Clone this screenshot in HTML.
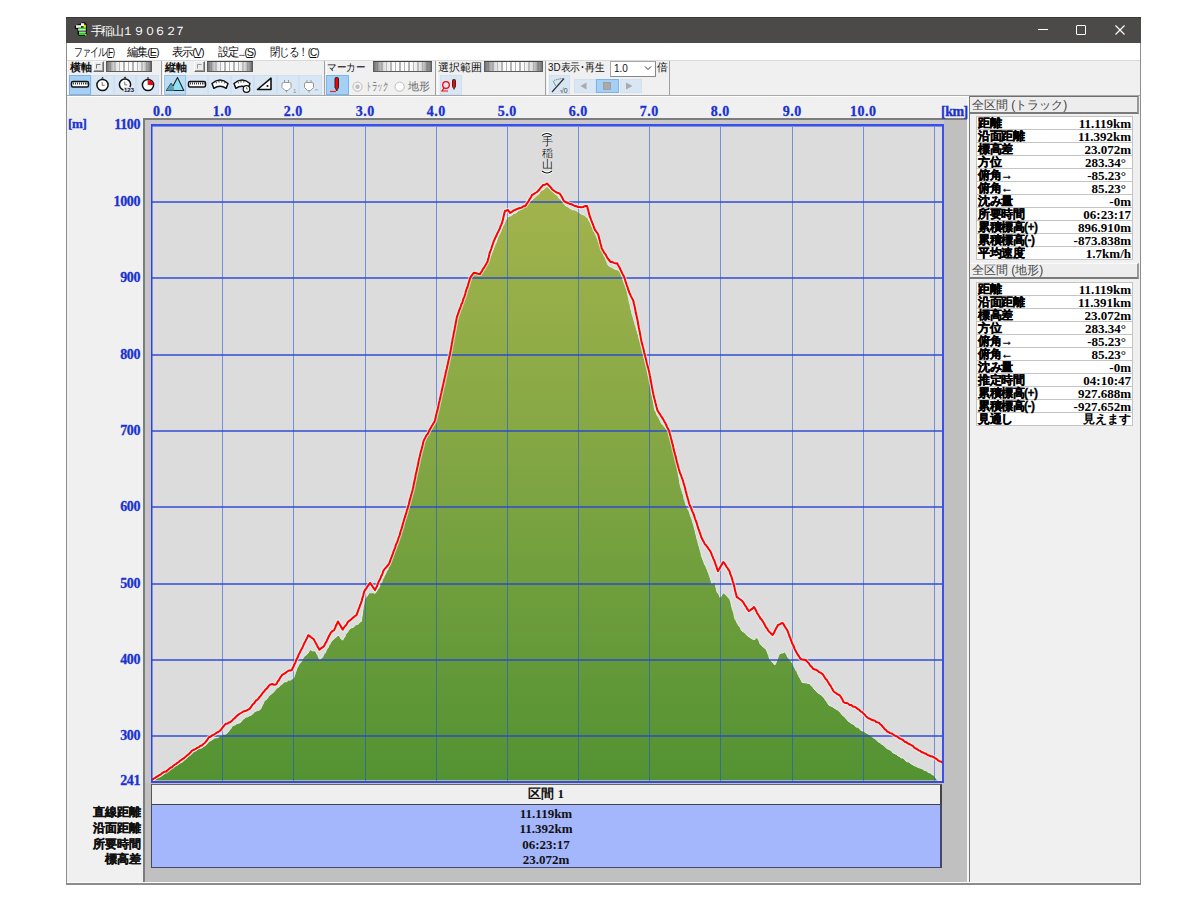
<!DOCTYPE html>
<html><head><meta charset="utf-8">
<style>
*{margin:0;padding:0;box-sizing:border-box}
html,body{width:1200px;height:900px;background:#fff;overflow:hidden;position:relative;font-family:"Liberation Sans",sans-serif}
.a{position:absolute}
#win{left:66px;top:17px;width:1075px;height:868px;border:1px solid #8c8c8c;border-top:none;background:#f0f0f0}
#title{left:66px;top:17px;width:1075px;height:26px;background:#4b4a48;color:#fff;font-size:12px;border-top:1px solid #3a3937}
#menu{left:67px;top:43px;width:1073px;height:17px;background:#fff;font-size:11px;color:#111}
#menu span{position:absolute;top:2px;white-space:nowrap;letter-spacing:-1.2px;font-size:11.5px;transform-origin:0 0}
#tb{left:67px;top:60px;width:1073px;height:36px;background:#f0f0f0;border-top:1px solid #dadada;border-bottom:1px solid #a8a8a8}
.grp{position:absolute;top:61px;height:34px;border-left:1px solid #fff;border-right:1px solid #a0a0a0}
.lbl{position:absolute;font-size:11px;color:#111;top:62px;line-height:11px}
.sld{position:absolute;top:61px;height:11px;border:1px solid #5c5c5c;border-top-color:#444;background:linear-gradient(90deg,rgba(90,90,90,.85),rgba(200,200,200,.5) 18%,rgba(255,255,255,0) 35%,rgba(255,255,255,0) 65%,rgba(200,200,200,.5) 82%,rgba(90,90,90,.85)),repeating-linear-gradient(90deg,#fafafa 0,#fafafa 2.5px,#b4b4b4 3px,#b4b4b4 4px,#fafafa 4.5px)}
.chk{position:absolute;top:61px;width:11px;height:11px;border:1px solid;border-color:#fff #6a6a6a #6a6a6a #fff;background:#ececec;box-shadow:inset -1px -1px 0 #a0a0a0}
.btn{position:absolute;top:75px;height:20px;background:#d9e7f4;border:1px solid #d0e0f0}
.btn.on{background:#a5cff5;border:1px solid #7ab6ee}
.btn.on2{background:#bcdcf6;border:1px solid #95c6ef}
#panelL{left:67px;top:96px;width:901px;height:787px;background:#f0f0f0;border-top:1px solid #fff}
#frame{left:143px;top:118px;width:825px;height:764px;background:#c0c0c0;border-top:2px solid #7c7c7c;border-left:2px solid #7c7c7c}
#frameIn{left:145px;top:120px;width:799px;height:5px;background:#c9c9c9;box-shadow:inset 5px 0 0 #c9c9c9}
#frameInL{left:145px;top:120px;width:6px;height:663px;background:#c6c6c6}
.xl{position:absolute;top:103.5px;width:60px;text-align:center;font:bold 14px "Liberation Serif",serif;color:#1a32d0;line-height:15px;-webkit-text-stroke:0.3px #1a32d0;letter-spacing:0.5px;text-indent:0.5px}
.yl{position:absolute;left:90px;width:50px;text-align:right;font:bold 14px "Liberation Serif",serif;color:#1a32d0;line-height:15px;-webkit-text-stroke:0.3px #1a32d0;letter-spacing:-0.4px}
#sep{left:967px;top:96px;width:3px;height:787px;background:#787878;border-left:2px solid #f8f8f8}
#botw{left:67px;top:882px;width:1073px;height:1px;background:#fcfcfc}
#botd{left:67px;top:883px;width:1073px;height:1px;background:#8c8c8c}
#panelR{left:970px;top:96px;width:170px;height:787px;background:#f0f0f0}
.hdr{position:absolute;left:970px;width:169px;height:16px;background:#ededed;border-top:1px solid #fafafa;border-bottom:2px solid #7a7a7a;border-right:2px solid #9a9a9a;font-size:12px;color:#444;padding-left:2px;line-height:13px;white-space:nowrap}
.st{left:976px;width:157px;background:#fff;border:1px solid #c4c4c4}
.st .r{position:absolute;left:0;width:155px;height:13px;border-bottom:1px solid #c4c4c4;white-space:nowrap}
.st .k{position:absolute;left:1px;top:0;font:bold 12px "Liberation Sans",sans-serif;line-height:13px;color:#000;letter-spacing:-0.5px;-webkit-text-stroke:0.3px #000}
.st .v{position:absolute;top:0;font:bold 13px "Liberation Serif",serif;line-height:13px;color:#000}
#sec{left:151px;top:784px;width:791px;height:21px;background:#efefef;border-left:1px solid #555;border-top:1px solid #666;border-right:2px solid #444;border-bottom:1px solid #444;text-align:center;font:bold 13px "Liberation Serif",serif;color:#111;line-height:18px}
#blue{left:151px;top:805px;width:791px;height:63px;background:#a4b6fc;border:1px solid #474767;border-top:none;border-right:2px solid #474767;text-align:center;font:bold 13px "Liberation Serif",serif;color:#111;padding-top:1px}
#blue div{height:15.4px;line-height:16px}
.bl{position:absolute;left:70px;width:71px;text-align:right;font:bold 12px "Liberation Sans",sans-serif;color:#111;white-space:nowrap;-webkit-text-stroke:0.3px #111}
</style></head><body>
<div class="a" id="win"></div>
<div class="a" id="title">
  <svg class="a" style="left:0;top:0" width="30" height="26"><g transform="translate(-66,-18)">
<path d="M74.5 26.5L77.5 24.5L80.5 23.5L82 22.2L85 22.2L86.8 24.5L86.8 33.5L87.5 35L85 36L79 36L77.5 34L77.5 29.5L75 28.8Z" fill="#160616"/>
<rect x="76" y="25.2" width="5" height="2.6" fill="#eee"/><rect x="81" y="23.2" width="3.2" height="3" fill="#f4f4ff"/>
<rect x="83.6" y="24.8" width="2.2" height="3.6" fill="#ee0"/>
<rect x="78.2" y="27.6" width="7.6" height="2" fill="#1e1"/>
<rect x="78.2" y="29.2" width="7.6" height="1.4" fill="#f4fff4"/>
<rect x="79" y="31.6" width="6.8" height="1.2" fill="#f0fff0"/>
<rect x="79" y="32.8" width="6.4" height="2.2" fill="#0e0"/>
<rect x="85" y="34" width="1.6" height="1.6" fill="#cc0"/>
</g></svg>
  <span class="a" style="left:24.5px;top:6px;width:12px;font-size:11.5px;text-align:center">手</span><span class="a" style="left:34.5px;top:6px;width:12px;font-size:11.5px;text-align:center">稲</span><span class="a" style="left:45.5px;top:6px;width:12px;font-size:11.5px;text-align:center">山</span><span class="a" style="left:56.0px;top:6px;width:12px;font-size:11.5px;text-align:center">１</span><span class="a" style="left:67.0px;top:6px;width:12px;font-size:11.5px;text-align:center">９</span><span class="a" style="left:77.5px;top:6px;width:12px;font-size:11.5px;text-align:center">０</span><span class="a" style="left:88.0px;top:6px;width:12px;font-size:11.5px;text-align:center">６</span><span class="a" style="left:98.5px;top:6px;width:12px;font-size:11.5px;text-align:center">２</span><span class="a" style="left:108.0px;top:6px;width:12px;font-size:11.5px;text-align:center">７</span>
  <div class="a" style="left:972px;top:11px;width:10px;height:1.2px;background:#fff"></div>
  <div class="a" style="left:1010px;top:7px;width:10px;height:9.5px;border:1.2px solid #fff;border-radius:1px"></div>
  <svg class="a" style="left:1049px;top:7px" width="11" height="11"><path d="M0.5 0.5L9.5 9.5M9.5 0.5L0.5 9.5" stroke="#fff" stroke-width="1.2"/></svg>
</div>
<div class="a" id="menu">
  <span style="left:6.5px;transform:scaleX(0.74)">ファイル(<u>F</u>)</span>
  <span style="left:60px;transform:scaleX(0.94)">編集(<u>E</u>)</span>
  <span style="left:105px;transform:scaleX(0.94)">表示(<u>V</u>)</span>
  <span style="left:150.5px;transform:scaleX(0.95)">設定...(<u>S</u>)</span>
  <span style="left:203px;transform:scaleX(0.875)">閉じる！(<u>C</u>)</span>
</div>
<div class="a" id="tb"></div>
<div class="grp" style="left:67px;width:95px"></div>
<div class="grp" style="left:163px;width:162px"></div>
<div class="grp" style="left:326px;width:110px"></div>
<div class="grp" style="left:437px;width:109px"></div>
<div class="grp" style="left:547px;width:123px"></div>
<div class="lbl" style="left:70px;font-weight:bold">横軸</div>
<div class="chk" style="left:93px"></div>
<div class="sld" style="left:106px;width:46px"></div>
<div class="btn on" style="left:69px;width:22px"></div>
<div class="btn" style="left:91px;width:23px"></div>
<div class="btn" style="left:114px;width:22px"></div>
<div class="btn" style="left:136px;width:23px"></div>
<div class="lbl" style="left:165px;font-weight:bold">縦軸</div>
<div class="chk" style="left:194px"></div>
<div class="sld" style="left:207px;width:46px"></div>
<div class="btn on2" style="left:164px;width:22px"></div>
<div class="btn" style="left:186px;width:22px"></div>
<div class="btn" style="left:208px;width:23px"></div>
<div class="btn" style="left:231px;width:23px"></div>
<div class="btn" style="left:254px;width:23px"></div>
<div class="btn" style="left:277px;width:22px"></div>
<div class="btn" style="left:299px;width:23px"></div>
<div class="lbl" style="left:326.5px;transform:scaleX(0.87);transform-origin:0 0;white-space:nowrap">マーカー</div>
<div class="sld" style="left:373px;width:59px"></div>
<div class="btn on" style="left:326px;width:23px"></div>
<div class="lbl" style="left:365.5px;top:81px;color:#666;font-size:11px;transform:scaleX(0.5);transform-origin:0 0;white-space:nowrap">トラック</div>
<div class="lbl" style="left:408px;top:81px;color:#666">地形</div>
<div class="lbl" style="left:438px">選択範囲</div>
<div class="sld" style="left:484px;width:59px"></div>
<div class="btn" style="left:440px;width:22px"></div>
<div class="lbl" style="left:548px;transform:scaleX(0.89);transform-origin:0 0;white-space:nowrap">3D表示･再生</div>
<div class="a" style="left:610px;top:61px;width:46px;height:16px;background:#fff;border:1px solid #a8a8a8;border-right-color:#888;border-bottom-color:#888;font-size:10px;padding-left:3px;line-height:14px;color:#111">1.0</div>
<div class="lbl" style="left:657px">倍</div>
<div class="btn" style="left:549px;top:75px;width:21px;height:19px"></div>
<div class="btn" style="left:574px;top:79px;width:22px;height:14px"></div>
<div class="btn on" style="left:596px;top:79px;width:23px;height:14px"></div>
<div class="btn" style="left:620px;top:79px;width:22px;height:14px"></div>
<svg class="a" style="left:0;top:0" width="700" height="100">
 <!-- small check buttons mark -->
 <path d="M96.5 64.5h4M96.5 64.5v4" stroke="#777" fill="none"/>
 <path d="M197.5 64.5h4M197.5 64.5v4" stroke="#999" fill="none"/>
 <!-- ruler 1 -->
 <rect x="71.5" y="81.5" width="17" height="5.5" rx="1.5" fill="#fff" stroke="#111" stroke-width="1.5"/>
 <path d="M73.5 82.5v2M75.5 82.5v2M77.5 82.5v2M79.5 82.5v2M81.5 82.5v2M83.5 82.5v2M85.5 82.5v2M87 82.5v2" stroke="#222" stroke-width="0.9"/>
 <!-- stopwatch -->
 <circle cx="102.5" cy="85" r="5.6" fill="#fff" stroke="#111" stroke-width="1.5"/>
 <path d="M101 78.6l1.5-1.6l1.5 1.6z" fill="#111"/>
 <path d="M102.2 82v3.3h2.5" stroke="#666" fill="none" stroke-width="0.9"/>
 <circle cx="125" cy="84.6" r="5.6" fill="#fff" stroke="#111" stroke-width="1.5"/>
 <path d="M123.5 78.2l1.5-1.6l1.5 1.6z" fill="#111"/>
 <path d="M124.8 81.6v3.3h2.5" stroke="#666" fill="none" stroke-width="0.9"/>
 <rect x="123.5" y="86.8" width="7" height="5" fill="#d9e7f4"/>
 <text x="124" y="92" font-family="Liberation Sans" font-size="6" font-weight="bold" fill="#111">123</text>
 <circle cx="148" cy="85" r="5.6" fill="#fff" stroke="#111" stroke-width="1.5"/>
 <path d="M148 79.9v5.1h5.1a5.1 5.1 0 0 0-5.1-5.1z" fill="#f00"/>
 <path d="M146.5 78.6l1.5-1.6l1.5 1.6z" fill="#111"/>
 <path d="M148 80v5" stroke="#666" stroke-width="0.8"/>
 <!-- mountains -->
 <path d="M166.5 90.5l4.5-7l2 2.5l4.5-8.6l6.3 13.1z" fill="#8fe0f0" stroke="#222" stroke-width="1.1" stroke-linejoin="round"/>
 <path d="M166.5 90.5l4.5-7l3 4.5l0 2.5z" fill="#5fa0b0"/>
 <!-- ruler 2 -->
 <rect x="188.5" y="81.5" width="17" height="5.5" rx="1.5" fill="#fff" stroke="#111" stroke-width="1.5"/>
 <path d="M190.5 82.5v2M192.5 82.5v2M194.5 82.5v2M196.5 82.5v2M198.5 82.5v2M200.5 82.5v2M202.5 82.5v2M204 82.5v2" stroke="#222" stroke-width="0.9"/>
 <!-- arc rulers -->
 <path d="M212 83.5Q220 76.5 228 83.5L226.2 88.3Q220 84 213.8 88.3Z" fill="#fff" stroke="#111" stroke-width="1.5" stroke-linejoin="round"/><path d="M216 81.8l0.6 1.6M219 80.9v1.7M222 81l-0.3 1.6M225 82l-0.7 1.5" stroke="#333" stroke-width="0.9"/>
 <path d="M234 83.5Q242 76.5 250 83.5L248.2 88.3Q242 84 235.8 88.3Z" fill="#fff" stroke="#111" stroke-width="1.5" stroke-linejoin="round"/><path d="M238 81.8l0.6 1.6M241 80.9v1.7M244 81l-0.3 1.6" stroke="#333" stroke-width="0.9"/>
 <circle cx="246.5" cy="89" r="3.3" fill="#fff" stroke="#111" stroke-width="1.2"/><path d="M246.5 87.2v1.8h1.5" stroke="#555" stroke-width="0.7" fill="none"/>
 <!-- set square -->
 <path d="M257.5 89.5L271 78.2V89.5Z" fill="#fff" stroke="#111" stroke-width="1.6" stroke-linejoin="round"/>
 <circle cx="267.5" cy="86" r="1.1" fill="#111"/>
 <!-- plugs -->
 <path d="M282 84q0-1.5 1.5-1.5h6q1.5 0 1.5 1.5v3.5l-3 3h-3l-3-3z" fill="#fff" stroke="#999" stroke-width="1"/>
 <path d="M284.5 80v2.5M288.5 80v2.5M286.5 90.5v2" stroke="#999" stroke-width="1"/>
 <text x="293" y="93" font-family="Liberation Sans" font-size="6" fill="#888">1</text>
 <path d="M304.5 84q0-1.5 1.5-1.5h6q1.5 0 1.5 1.5v3.5l-3 3h-3l-3-3z" fill="#fff" stroke="#999" stroke-width="1"/>
 <path d="M307 80v2.5M311 80v2.5M309 90.5v2" stroke="#999" stroke-width="1"/>
 <path d="M315 90.5l1.5-1.5l1.5 1.5" stroke="#888" fill="none" stroke-width="0.8"/>
 <!-- marker pen -->
 <rect x="335" y="77.5" width="3.5" height="11" rx="1.2" fill="#f00" stroke="#222" stroke-width="1"/>
 <path d="M335.5 88.5l1.3 2.5l1.3-2.5" fill="#f00" stroke="#222" stroke-width="0.8"/>
 <path d="M330 91.5h6" stroke="#f22" stroke-width="1.3"/>
 <!-- radios -->
 <circle cx="357.5" cy="86.7" r="4.6" fill="#f4f4f4" stroke="#bbb" stroke-width="1"/>
 <circle cx="357.5" cy="86.7" r="2.2" fill="#bdbdbd"/>
 <circle cx="399.6" cy="86.7" r="4.6" fill="#fff" stroke="#bbb" stroke-width="1"/>
 <!-- lasso -->
 <circle cx="446" cy="85" r="3.3" fill="none" stroke="#f00" stroke-width="1.3"/>
 <path d="M444 88l-2 3h6" stroke="#f00" fill="none" stroke-width="1.2"/>
 <rect x="452.5" y="79.5" width="3" height="8" rx="1" fill="#f00" stroke="#222" stroke-width="0.9"/>
 <path d="M453 87.5l1 2l1-2" fill="#f00" stroke="#222" stroke-width="0.6"/>
 <!-- 3D icon -->
 <path d="M552 92l12-13.5" stroke="#333" stroke-width="1.2"/>
 <path d="M554 80.5q4-1.5 9-2" stroke="#555" stroke-dasharray="1,1" fill="none"/>
 <path d="M553 81l3 5" stroke="#5aa" stroke-width="1"/>
 <text x="560" y="93" font-family="Liberation Sans" font-size="7" fill="#444">√0</text>
 <!-- play buttons -->
 <path d="M580.5 86l6-3.5v7z" fill="#aaa"/>
 <rect x="603.5" y="82.5" width="7" height="7" fill="#aaa" stroke="#999" stroke-width="0.8"/>
 <path d="M626 82.5l6.5 3.5l-6.5 3.5z" fill="#aaa"/>
 <!-- combobox chevron -->
 <path d="M645 66.5l3 3l3-3" stroke="#333" fill="none" stroke-width="1"/>
</svg>
<div class="a" id="panelL"></div>
<div class="a" id="frame"></div>
<div class="a" id="frameIn"></div><div class="a" id="frameInL"></div>
<div class="a" id="sep"></div>
<div class="a" id="panelR"></div><div class="a" id="botw"></div><div class="a" id="botd"></div>
<div class="xl" style="left:153px;width:30px;text-align:left;text-indent:0">0.0</div><div class="xl" style="left:192.0px">1.0</div><div class="xl" style="left:263.0px">2.0</div><div class="xl" style="left:335.0px">3.0</div><div class="xl" style="left:406.0px">4.0</div><div class="xl" style="left:477.0px">5.0</div><div class="xl" style="left:548.0px">6.0</div><div class="xl" style="left:619.0px">7.0</div><div class="xl" style="left:690.0px">8.0</div><div class="xl" style="left:762.0px">9.0</div><div class="xl" style="left:833.0px">10.0</div>
<div class="xl" style="left:941px;width:26px;text-align:left;letter-spacing:-0.5px;text-indent:0">[km]</div>
<div class="yl" style="left:68px;top:115.5px;width:26px;text-align:left;font-size:13px;letter-spacing:-0.3px">[m]</div>
<div class="yl" style="top:117px">1100</div><div class="yl" style="top:194px">1000</div><div class="yl" style="top:270px">900</div><div class="yl" style="top:347px">800</div><div class="yl" style="top:423px">700</div><div class="yl" style="top:499px">600</div><div class="yl" style="top:576px">500</div><div class="yl" style="top:652px">400</div><div class="yl" style="top:728px">300</div>
<div class="yl" style="top:772.5px">241</div>
<svg width="1200" height="900" style="position:absolute;left:0;top:0">
<defs><linearGradient id="gg" x1="0" y1="183" x2="0" y2="781" gradientUnits="userSpaceOnUse">
<stop offset="0" stop-color="#a4b44c"/><stop offset="0.41" stop-color="#86a845"/><stop offset="1" stop-color="#539232"/></linearGradient></defs>
<rect x="151" y="124" width="792" height="657" fill="#dcdcdc"/>
<polygon points="151.0,781.0 151.7,781.0 153.4,780.7 155.0,779.8 156.7,777.7 158.4,776.8 160.0,777.0 161.7,775.6 163.2,774.8 164.8,773.5 166.3,771.9 167.9,771.1 169.4,770.0 171.0,768.7 172.6,767.8 174.1,766.3 175.7,765.7 177.2,764.6 178.8,764.1 180.3,762.8 181.9,762.3 183.4,761.1 185.0,759.3 186.4,758.2 187.9,756.9 189.4,755.5 190.8,754.7 192.3,752.9 193.8,751.7 195.2,751.1 196.7,750.0 198.3,748.9 199.9,748.2 201.6,748.1 203.2,746.8 204.8,745.9 206.3,744.7 207.8,742.9 209.2,741.3 210.7,740.7 212.6,739.5 214.4,738.2 216.3,737.8 218.1,737.5 220.0,735.8 221.8,735.4 223.5,734.0 225.2,734.3 227.0,733.1 228.2,732.0 229.3,730.4 230.5,729.1 231.6,727.4 232.8,725.5 234.8,725.1 236.7,723.8 238.7,723.2 240.1,722.7 241.5,721.5 242.8,719.2 244.2,718.8 245.6,717.3 247.6,716.8 249.5,715.7 251.5,715.0 253.2,713.3 255.0,711.5 257.5,710.6 260.0,709.7 260.9,708.5 261.9,706.0 262.8,704.6 263.8,702.1 264.7,700.5 266.0,699.7 267.3,698.5 268.5,696.5 269.8,695.4 271.1,694.0 272.4,693.3 273.8,691.8 275.1,690.2 276.5,688.6 277.8,687.5 279.2,686.8 280.5,684.8 281.9,684.6 283.2,682.8 284.9,681.7 286.7,681.7 288.4,680.1 290.2,680.2 291.9,679.0 293.7,677.9 294.3,676.0 295.0,674.1 295.6,672.4 296.3,670.3 296.9,668.3 298.0,666.3 299.0,664.4 300.1,663.1 301.2,661.9 302.2,659.7 303.3,657.8 304.5,655.9 305.7,655.5 307.0,654.1 308.2,653.0 309.4,650.6 310.6,649.7 312.5,650.9 314.3,650.7 316.2,652.2 317.0,654.2 317.8,655.5 318.6,657.2 319.4,659.4 321.0,658.7 322.7,657.0 323.6,654.8 324.5,653.8 325.4,652.7 326.3,650.2 327.1,648.5 328.0,647.9 328.9,645.6 329.8,644.4 330.7,642.5 332.2,640.4 333.6,639.4 335.1,637.7 336.5,636.9 338.0,635.2 339.6,636.2 341.2,639.1 342.8,640.1 343.7,637.8 344.7,637.2 345.6,634.6 346.5,633.3 347.5,632.5 348.4,630.4 350.0,628.8 351.6,627.7 353.2,627.3 354.9,625.8 356.5,624.2 358.1,624.4 359.7,622.1 361.3,621.5 361.6,619.0 361.8,617.5 362.1,616.0 362.4,614.3 362.6,611.6 362.9,610.0 363.2,607.7 363.4,606.4 363.7,605.0 364.0,603.1 364.2,601.4 364.5,599.0 365.7,597.8 366.9,596.3 368.2,594.5 369.4,592.6 371.3,592.8 373.1,592.7 375.0,593.4 376.3,591.7 377.7,589.3 379.0,587.7 379.9,585.3 380.7,583.9 381.6,582.7 382.4,579.8 383.3,578.6 384.1,576.5 385.0,574.8 385.9,573.1 386.7,570.8 387.6,570.2 388.4,567.4 389.3,566.0 390.0,564.3 390.6,562.3 391.3,559.9 391.9,558.9 392.6,556.5 393.2,554.6 393.9,552.7 394.5,551.1 395.2,549.2 395.8,548.2 396.5,546.2 397.1,545.1 397.8,543.2 398.4,541.5 399.1,539.0 399.6,536.8 400.2,535.4 400.7,533.3 401.2,532.0 401.7,530.2 402.3,528.7 402.8,526.8 403.3,524.4 403.9,522.8 404.4,521.2 404.9,518.7 405.4,516.9 406.0,515.7 406.5,514.0 407.0,511.6 407.5,510.6 408.0,508.1 408.5,506.1 409.0,504.4 409.6,502.6 410.1,500.8 410.6,499.4 411.1,497.5 411.6,495.4 412.1,494.0 412.6,492.0 413.0,489.8 413.4,488.9 413.7,487.2 414.1,485.1 414.5,482.8 414.9,481.1 415.3,479.4 415.6,476.9 416.0,475.6 416.4,473.9 416.8,471.6 417.2,469.7 417.6,468.9 417.9,466.4 418.3,464.8 418.7,463.0 419.1,461.8 419.6,459.5 420.0,457.3 420.5,456.4 420.9,453.7 421.4,451.4 421.8,450.5 422.3,447.9 422.7,446.4 423.2,445.3 423.6,443.0 424.5,441.6 425.4,439.1 426.3,438.1 427.2,436.4 428.2,434.9 429.1,432.8 430.0,431.7 430.9,430.0 432.1,427.4 433.4,425.7 434.6,424.0 435.1,421.9 435.5,420.9 435.9,417.8 436.4,416.9 436.9,414.2 437.3,412.9 437.8,410.7 438.2,409.0 438.6,407.1 439.0,405.8 439.4,403.5 439.9,401.3 440.3,399.5 440.7,397.6 441.1,396.9 441.5,394.8 441.9,393.4 442.3,391.3 442.7,388.5 443.2,387.6 443.6,386.0 444.0,384.1 444.4,382.0 444.8,380.2 445.2,378.1 445.6,376.4 446.0,375.0 446.4,372.4 446.8,371.0 447.2,369.0 447.6,367.9 448.0,365.8 448.4,364.1 448.8,362.2 449.2,359.6 449.6,358.0 449.9,355.9 450.3,354.4 450.6,352.3 450.9,350.8 451.3,349.4 451.6,347.9 451.9,345.7 452.3,344.3 452.6,341.5 452.9,340.1 453.2,339.2 453.6,336.2 453.9,334.8 454.2,332.6 454.6,330.8 454.9,330.2 455.2,328.5 455.6,326.3 455.9,323.8 456.2,322.3 456.6,320.4 456.9,319.0 457.6,317.4 458.2,315.6 458.9,313.5 459.6,311.8 460.2,309.4 460.9,308.1 461.5,306.9 462.2,304.8 462.9,302.1 463.5,300.8 464.2,299.0 464.8,297.5 465.3,295.0 465.9,294.1 466.4,291.7 467.0,290.2 467.5,288.0 468.1,287.0 468.6,284.9 469.2,282.7 469.7,280.3 470.3,279.0 471.5,277.2 472.8,274.8 474.0,273.9 475.3,272.5 476.5,270.2 477.7,271.4 478.9,273.4 480.1,275.0 481.2,273.3 482.2,271.4 483.3,270.2 484.3,268.8 485.4,266.7 486.4,264.7 487.5,263.0 488.3,261.6 489.2,258.8 490.0,257.0 490.7,255.7 491.4,253.8 492.1,252.3 492.8,250.7 493.5,248.2 494.2,247.0 494.8,245.0 495.5,243.7 496.2,242.4 496.9,240.3 497.6,237.7 498.3,236.6 499.0,235.0 499.8,233.5 500.6,231.9 501.4,229.8 502.2,228.2 503.0,225.3 503.8,224.8 504.6,222.7 505.4,220.7 506.2,219.4 507.0,217.0 510.0,216.0 511.7,215.5 513.3,213.4 515.0,213.4 516.7,212.4 518.3,210.6 520.0,210.0 521.4,209.2 522.9,207.8 524.3,206.1 525.7,205.9 527.1,203.8 528.6,203.3 530.0,202.0 531.4,200.6 532.8,199.0 534.2,198.1 535.7,196.6 537.1,194.9 538.5,194.7 539.9,192.1 541.3,190.6 542.8,190.0 544.2,189.1 545.6,187.6 547.0,186.0 548.4,187.7 549.7,188.7 551.1,190.3 552.5,191.2 553.8,192.5 555.2,194.2 556.5,194.9 557.9,196.3 559.3,198.6 560.6,199.2 562.0,201.0 563.3,203.0 564.7,204.7 566.0,206.0 567.7,206.7 569.4,208.0 571.1,209.0 572.9,209.9 574.6,209.8 576.3,210.7 578.0,212.0 579.7,212.8 581.3,214.0 583.0,214.7 584.7,215.3 586.3,217.1 588.0,218.0 589.0,220.7 590.0,222.0 590.8,223.6 591.6,225.7 592.4,227.2 593.2,229.1 594.0,231.5 594.8,232.5 595.6,234.8 596.4,236.4 597.2,238.3 598.0,240.0 598.7,242.4 599.4,243.0 600.1,245.8 600.9,246.9 601.6,249.1 602.3,251.1 603.0,252.7 603.7,254.1 604.4,256.5 605.1,257.3 605.9,259.8 606.6,261.3 607.3,263.3 608.0,265.0 610.0,266.6 612.0,267.3 614.0,268.7 616.0,269.5 618.0,270.0 620.0,271.3 620.6,272.6 621.2,274.6 621.8,276.0 622.4,277.8 623.0,280.4 623.7,281.0 624.3,283.6 624.9,284.7 625.5,286.4 626.1,288.0 626.7,290.0 627.1,291.3 627.5,293.6 627.9,295.1 628.3,297.3 628.7,298.9 629.1,301.6 629.6,303.5 630.0,304.7 630.4,306.8 630.8,309.1 631.2,310.1 631.6,311.6 632.0,314.0 632.5,315.4 633.1,317.1 633.6,319.6 634.1,320.9 634.7,322.7 635.2,325.1 635.7,326.1 636.3,328.7 636.8,330.2 637.3,331.7 637.9,334.0 638.4,335.1 638.9,337.7 639.5,339.5 640.0,340.7 640.4,342.5 640.9,344.5 641.3,346.7 641.8,348.1 642.2,349.9 642.6,351.9 643.1,353.7 643.5,355.3 644.0,357.3 644.4,358.2 644.9,360.4 645.3,362.0 645.7,364.1 646.1,365.5 646.5,367.4 647.0,368.9 647.4,371.9 647.8,372.9 648.2,374.9 648.6,377.3 649.0,378.2 649.5,381.1 649.9,381.8 650.3,383.5 650.7,386.0 651.0,387.6 651.3,389.5 651.6,392.1 651.9,393.9 652.2,395.6 652.5,397.0 652.9,399.0 653.2,400.4 653.5,403.1 653.8,404.3 654.1,406.0 654.4,408.3 654.7,410.0 655.5,411.2 656.4,413.1 657.2,415.6 658.0,416.1 658.8,417.8 659.6,419.6 660.5,421.3 661.3,423.3 662.6,424.8 664.0,426.2 665.3,427.9 666.7,429.3 668.0,431.3 668.6,432.7 669.1,435.0 669.7,436.4 670.2,438.3 670.8,440.6 671.4,441.4 671.9,443.3 672.5,446.1 673.0,447.3 673.6,449.5 674.1,450.4 674.7,452.7 675.0,454.6 675.3,456.9 675.6,458.0 675.9,460.4 676.3,462.1 676.6,463.6 676.9,466.3 677.2,467.3 677.5,469.2 677.8,471.3 678.1,472.7 678.4,475.3 678.8,476.8 679.1,478.6 679.4,480.4 679.7,482.8 680.0,484.0 680.5,486.6 681.1,488.2 681.6,489.5 682.1,491.4 682.6,493.4 683.2,494.6 683.7,496.5 684.2,499.7 684.8,500.3 685.3,502.7 686.1,505.3 687.0,507.0 687.9,509.3 688.7,510.7 689.4,512.0 690.0,514.2 690.7,516.8 691.3,517.6 692.0,519.6 692.6,521.9 693.3,524.0 693.7,525.3 694.2,527.1 694.6,529.6 695.1,530.5 695.5,533.5 696.0,534.9 696.4,535.8 696.9,538.8 697.3,540.0 697.8,541.6 698.3,543.8 698.9,545.8 699.4,547.2 699.9,549.6 700.4,550.9 701.0,553.0 701.5,556.0 702.0,557.3 702.8,559.6 703.5,561.0 704.2,563.1 705.0,565.2 705.8,566.0 706.5,568.3 707.2,569.6 708.0,572.0 708.6,573.2 709.1,574.9 709.7,576.7 710.3,578.2 710.9,580.2 711.4,582.1 712.0,584.0 713.4,582.8 714.7,581.3 715.1,583.7 715.5,585.6 715.9,587.2 716.3,588.8 716.7,590.7 717.5,592.9 718.4,593.5 719.2,595.1 720.0,597.3 721.1,596.2 722.2,594.4 723.3,592.7 724.8,593.8 726.3,595.5 727.8,596.9 729.3,598.7 730.0,599.7 730.5,601.4 731.0,603.2 731.4,605.0 731.9,607.4 732.4,609.2 732.9,610.7 733.4,612.4 733.9,613.9 734.3,616.4 734.8,618.6 735.3,619.7 736.3,620.9 737.2,623.2 738.2,624.8 739.1,626.4 740.1,627.1 741.0,629.5 742.0,631.0 743.8,632.1 745.5,633.7 747.3,635.7 749.0,636.8 750.6,637.9 752.3,638.9 754.0,639.7 755.6,638.7 757.3,637.0 758.0,639.0 758.6,640.3 759.3,641.4 760.0,643.7 761.5,645.4 763.0,646.8 764.5,648.1 766.0,649.0 766.7,650.9 767.3,651.9 768.0,653.9 768.7,655.6 769.3,658.1 770.0,659.7 771.6,661.5 773.1,662.8 774.7,665.0 775.5,663.9 776.2,662.1 777.0,660.2 777.8,657.8 778.5,655.8 779.3,654.3 781.1,653.0 782.9,653.0 784.7,651.7 785.7,653.6 786.7,654.7 787.7,657.2 788.7,658.3 790.0,660.2 791.4,661.8 792.7,663.7 793.5,665.3 794.4,667.4 795.2,668.7 796.1,670.7 796.9,671.6 797.8,674.1 798.6,675.2 799.5,677.8 800.3,678.5 801.2,680.4 802.0,682.3 804.0,682.7 806.0,682.8 808.0,683.4 810.0,683.7 811.3,685.9 812.6,686.6 814.0,689.0 815.3,690.3 816.9,691.9 818.5,693.4 820.1,694.2 821.7,695.6 823.3,697.0 824.4,698.4 825.5,700.2 826.5,701.5 827.6,703.0 828.7,705.0 830.4,705.9 832.1,706.5 833.9,707.8 835.6,708.9 837.3,709.8 838.7,710.9 840.1,712.1 841.5,714.1 842.9,715.8 844.2,716.3 845.6,718.2 847.0,719.7 848.4,721.4 849.8,722.2 851.3,723.5 852.9,724.1 854.5,725.0 856.0,727.0 857.5,727.3 859.1,728.0 860.7,730.2 862.2,730.8 864.1,731.5 865.9,732.7 867.8,733.8 869.6,734.8 871.5,736.2 872.9,737.6 874.3,738.2 875.8,739.5 877.2,740.6 878.6,742.3 880.0,742.3 881.4,744.2 882.8,744.7 884.3,745.9 885.7,747.6 887.1,748.6 888.6,749.4 890.2,749.9 891.8,751.6 893.3,753.1 894.9,753.7 896.4,754.4 898.0,755.8 899.5,756.4 901.1,758.0 902.6,757.9 904.2,759.0 905.8,761.0 907.3,761.9 908.9,761.8 910.4,763.5 912.0,764.2 913.8,765.6 915.5,766.1 917.3,767.1 919.1,767.8 920.9,768.3 922.6,769.1 924.4,770.4 926.3,770.7 928.1,772.5 930.0,772.7 931.8,774.3 933.7,775.1 935.0,776.7 936.3,778.6 937.6,780.5 939.8,781.4 942.0,781.0 942.0,781.0" fill="url(#gg)" stroke="#e6f0e6" stroke-width="1"/>
<line x1="222.5" y1="127" x2="222.5" y2="781" stroke="#1f4fdc" stroke-opacity="0.55" stroke-width="1"/><line x1="293.5" y1="127" x2="293.5" y2="781" stroke="#1f4fdc" stroke-opacity="0.55" stroke-width="1"/><line x1="365.5" y1="127" x2="365.5" y2="781" stroke="#1f4fdc" stroke-opacity="0.55" stroke-width="1"/><line x1="436.5" y1="127" x2="436.5" y2="781" stroke="#1f4fdc" stroke-opacity="0.55" stroke-width="1"/><line x1="507.5" y1="127" x2="507.5" y2="781" stroke="#1f4fdc" stroke-opacity="0.55" stroke-width="1"/><line x1="578.5" y1="127" x2="578.5" y2="781" stroke="#1f4fdc" stroke-opacity="0.55" stroke-width="1"/><line x1="649.5" y1="127" x2="649.5" y2="781" stroke="#1f4fdc" stroke-opacity="0.55" stroke-width="1"/><line x1="720.5" y1="127" x2="720.5" y2="781" stroke="#1f4fdc" stroke-opacity="0.55" stroke-width="1"/><line x1="792.5" y1="127" x2="792.5" y2="781" stroke="#1f4fdc" stroke-opacity="0.55" stroke-width="1"/><line x1="863.5" y1="127" x2="863.5" y2="781" stroke="#1f4fdc" stroke-opacity="0.55" stroke-width="1"/><line x1="934.5" y1="127" x2="934.5" y2="781" stroke="#1f4fdc" stroke-opacity="0.55" stroke-width="1"/><rect x="152" y="201" width="790" height="2" fill="#2a48d0" fill-opacity="0.72"/><rect x="152" y="277" width="790" height="2" fill="#2a48d0" fill-opacity="0.72"/><rect x="152" y="354" width="790" height="2" fill="#2a48d0" fill-opacity="0.72"/><rect x="152" y="430" width="790" height="2" fill="#2a48d0" fill-opacity="0.72"/><rect x="152" y="506" width="790" height="2" fill="#2a48d0" fill-opacity="0.72"/><rect x="152" y="583" width="790" height="2" fill="#2a48d0" fill-opacity="0.72"/><rect x="152" y="659" width="790" height="2" fill="#2a48d0" fill-opacity="0.72"/><rect x="152" y="735" width="790" height="2" fill="#2a48d0" fill-opacity="0.72"/>
<polyline points="151.7,780.1 153.2,778.9 154.7,778.1 156.3,777.0 157.8,776.2 159.3,775.1 160.9,774.3 162.6,772.8 164.2,771.8 165.9,771.6 167.5,770.4 168.9,769.0 170.4,767.8 171.9,767.3 173.3,765.7 174.7,764.7 176.0,764.1 177.4,762.8 178.8,762.0 180.1,760.6 181.5,759.9 182.9,758.8 184.4,757.9 185.9,756.4 187.3,755.2 188.8,754.1 190.2,752.8 191.7,750.9 193.2,750.0 194.6,749.5 196.1,748.6 197.6,747.6 199.0,747.1 200.4,745.7 201.9,745.4 203.4,744.0 204.8,743.0 205.8,741.7 206.9,740.4 207.9,738.8 208.9,737.2 210.5,736.7 212.1,735.4 213.7,734.8 215.3,733.7 216.8,732.6 218.2,732.0 219.7,731.0 221.2,729.6 222.3,727.8 223.5,726.3 224.7,724.9 225.8,723.7 227.4,723.6 228.9,722.5 230.5,722.0 231.9,720.8 233.2,719.3 234.6,718.2 236.0,716.8 237.3,715.5 238.7,714.4 240.2,713.5 241.8,712.5 243.3,711.5 245.2,711.1 247.2,710.1 249.1,709.2 250.3,708.0 251.4,706.4 252.6,704.5 253.8,703.7 254.9,702.1 256.1,700.4 257.3,699.8 258.4,698.6 259.6,696.9 260.8,695.8 261.9,694.0 263.1,692.4 264.3,691.3 265.5,689.5 266.7,688.7 267.9,687.1 269.1,685.5 270.3,684.4 272.2,684.0 274.0,684.7 275.9,684.4 276.8,683.5 277.8,681.3 278.7,680.5 279.6,678.8 280.5,677.2 281.5,675.9 282.4,674.7 284.0,673.9 285.6,672.9 287.2,671.5 288.8,670.6 290.4,670.5 292.0,669.9 292.7,667.9 293.4,666.9 294.1,664.9 294.8,663.8 295.5,662.3 296.2,660.2 296.9,658.6 297.6,657.6 298.3,655.6 299.0,653.9 299.7,653.0 300.5,651.0 301.2,649.7 301.9,648.5 302.6,647.2 303.3,645.7 304.0,643.9 304.7,642.3 305.4,641.5 306.1,639.5 306.8,638.6 307.5,637.1 308.2,635.2 309.6,636.1 311.0,637.2 312.4,638.3 313.8,639.3 314.6,640.9 315.4,642.4 316.2,643.8 317.0,645.4 317.8,647.1 318.6,648.2 319.4,649.7 321.0,648.3 322.7,647.2 324.3,645.7 325.0,644.0 325.7,642.7 326.4,641.8 327.1,640.0 327.9,638.6 328.6,636.7 329.3,635.6 330.0,634.3 330.7,632.8 332.3,631.2 333.9,630.4 334.6,629.0 335.3,627.6 335.9,625.6 336.6,624.6 337.3,623.0 338.0,621.5 339.0,623.3 339.9,624.6 340.9,626.5 341.8,628.2 342.8,629.6 343.7,627.8 344.7,626.5 345.6,625.7 346.5,624.6 347.5,622.6 348.4,621.5 349.8,620.4 351.1,619.5 352.4,618.1 353.8,617.1 355.1,616.0 356.5,615.1 357.1,613.4 357.7,612.0 358.3,610.1 358.9,608.5 359.5,607.3 360.1,605.0 360.7,603.9 361.3,602.2 361.8,600.8 362.2,598.8 362.7,597.1 363.1,596.0 363.6,593.9 364.0,592.2 364.5,590.9 365.4,589.5 366.4,588.4 367.4,586.5 368.3,585.4 369.2,584.1 370.2,582.9 371.2,584.6 372.1,585.7 373.1,587.5 374.0,588.4 375.0,590.1 375.7,588.5 376.4,587.3 377.1,586.0 377.7,584.1 378.4,582.4 379.1,580.8 379.8,579.7 380.5,578.1 381.2,576.2 381.9,575.1 382.5,573.5 383.2,571.3 383.9,570.0 385.0,568.5 386.1,567.6 387.1,566.2 388.2,565.0 389.3,563.4 389.9,561.7 390.5,559.9 391.0,558.5 391.6,557.3 392.2,555.3 392.8,553.8 393.3,552.2 393.9,550.7 394.5,549.1 395.1,548.0 395.6,545.7 396.2,544.0 396.8,543.2 397.4,541.6 397.9,540.1 398.5,538.0 399.1,536.5 399.6,535.3 400.1,533.6 400.6,531.3 401.1,530.2 401.6,528.6 402.1,526.8 402.6,525.1 403.0,523.2 403.5,521.7 404.0,519.9 404.5,518.1 405.0,517.0 405.5,515.1 406.0,513.9 406.5,512.0 406.9,510.0 407.4,509.2 407.8,507.5 408.2,506.1 408.7,504.5 409.1,502.9 409.6,501.1 410.0,499.0 410.4,498.1 410.9,496.0 411.3,494.5 411.7,493.3 412.2,491.6 412.6,490.0 412.9,488.3 413.3,487.1 413.6,485.2 414.0,483.3 414.3,481.6 414.6,480.6 415.0,478.6 415.3,477.2 415.6,475.2 416.0,473.4 416.3,472.1 416.7,470.8 417.0,468.5 417.3,467.5 417.7,466.0 418.0,464.2 418.4,462.6 418.7,460.7 419.1,458.6 419.5,457.5 419.9,456.1 420.3,453.8 420.7,452.3 421.1,450.7 421.6,449.3 422.0,447.6 422.4,446.0 422.8,444.6 423.2,442.3 423.6,441.1 424.4,439.2 425.2,437.8 426.0,436.3 426.8,434.8 427.7,434.1 428.5,432.5 429.3,430.3 430.1,429.2 430.9,427.7 431.8,426.0 432.8,424.5 433.7,423.0 434.6,421.6 435.0,420.1 435.4,418.4 435.8,416.6 436.2,414.8 436.6,413.3 437.0,411.5 437.4,410.2 437.8,408.7 438.2,406.9 438.6,405.1 438.9,403.2 439.3,401.7 439.7,400.2 440.0,398.8 440.4,397.3 440.7,395.3 441.1,394.0 441.5,392.2 441.8,390.4 442.2,388.8 442.6,387.1 442.9,385.7 443.3,384.3 443.6,382.4 444.0,381.1 444.3,379.3 444.7,377.6 445.0,376.3 445.4,374.8 445.7,372.7 446.1,371.4 446.4,369.9 446.8,368.7 447.1,367.2 447.5,365.1 447.8,364.0 448.2,362.3 448.5,360.3 448.9,358.9 449.2,357.0 449.6,355.8 449.9,354.5 450.2,352.7 450.5,351.3 450.8,349.5 451.1,347.8 451.4,346.2 451.7,344.5 452.0,342.4 452.3,341.2 452.6,339.1 452.9,337.6 453.2,336.5 453.6,334.2 453.9,332.6 454.2,331.0 454.5,330.1 454.8,327.8 455.1,326.0 455.4,325.2 455.7,322.9 456.0,321.9 456.3,320.1 456.6,318.6 456.9,316.7 457.5,315.6 458.0,313.8 458.6,312.4 459.1,310.3 459.7,309.4 460.3,307.7 460.8,306.3 461.4,304.3 462.0,303.4 462.5,302.0 463.1,299.7 463.6,298.4 464.2,297.1 464.7,295.5 465.2,294.1 465.7,292.0 466.2,290.3 466.7,288.7 467.2,287.5 467.8,286.0 468.3,284.0 468.8,282.4 469.3,280.8 469.8,279.1 470.3,277.6 471.5,275.9 472.8,274.0 474.0,272.7 476.0,273.1 478.1,273.9 480.1,273.9 481.0,272.3 482.0,271.1 482.9,269.0 483.8,268.0 484.7,266.5 485.6,264.9 486.6,263.2 487.5,261.7 487.9,260.1 488.3,258.6 488.8,257.2 489.2,254.9 489.6,253.3 490.0,252.0 490.6,250.6 491.2,249.0 491.8,247.0 492.3,245.3 492.9,243.9 493.5,242.0 494.2,240.2 494.9,238.8 495.6,237.2 496.2,236.1 496.9,234.3 497.6,232.8 498.3,231.7 499.0,230.0 499.8,228.7 500.5,226.3 501.2,224.9 502.0,223.0 502.4,221.2 502.9,219.9 503.3,217.9 503.7,215.9 504.1,214.2 504.6,212.3 505.0,211.0 508.0,210.0 509.0,211.5 510.0,213.0 511.7,211.9 513.3,210.7 515.0,210.0 516.7,209.2 518.3,208.5 520.0,208.0 521.7,207.6 523.3,206.3 525.0,206.0 526.0,205.1 527.0,203.3 528.0,202.0 528.8,200.7 529.6,199.2 530.4,198.1 531.2,196.7 532.0,195.0 533.7,194.1 535.3,193.0 537.0,192.0 538.2,190.8 539.4,189.5 540.6,187.7 541.8,186.6 543.0,185.0 545.0,184.7 547.0,183.5 548.2,184.8 549.4,185.9 550.6,187.2 551.8,188.9 553.0,190.0 554.4,191.0 555.8,192.0 557.2,192.7 558.6,193.0 560.0,194.0 560.8,195.1 561.6,196.6 562.4,197.9 563.2,199.8 564.0,201.0 566.0,202.3 568.0,203.0 569.7,204.0 571.3,204.1 573.0,205.0 574.7,206.0 576.3,206.2 578.0,207.0 579.7,206.9 581.3,207.2 583.0,207.0 585.0,206.1 587.0,206.0 587.4,207.2 587.9,209.4 588.3,210.5 588.7,212.2 589.1,213.9 589.6,215.6 590.0,217.0 590.6,218.2 591.2,220.1 591.9,221.8 592.5,223.5 593.1,224.9 593.8,226.8 594.4,228.8 595.0,230.0 596.0,231.2 597.0,232.7 598.0,234.0 598.4,235.3 598.9,237.1 599.3,239.1 599.8,240.3 600.2,242.7 600.7,244.4 601.1,245.3 601.6,247.7 602.0,249.0 602.9,250.3 603.8,252.0 604.6,253.4 605.5,254.3 606.4,256.0 607.2,257.4 608.1,258.9 609.0,260.0 610.7,262.0 612.4,262.1 614.0,262.9 615.6,263.4 617.3,263.3 618.0,264.9 618.8,266.3 619.5,267.4 620.3,269.3 621.0,270.6 621.8,272.4 622.5,273.9 623.3,275.3 624.0,276.7 624.5,278.0 625.1,280.0 625.6,281.6 626.1,282.8 626.6,285.1 627.2,286.4 627.7,287.6 628.2,289.9 628.8,290.8 629.3,292.7 630.1,294.1 630.9,296.1 631.7,297.6 632.5,299.1 633.3,300.7 633.7,302.5 634.0,304.0 634.4,305.6 634.8,307.2 635.1,308.8 635.5,311.0 635.8,312.8 636.2,314.3 636.6,316.1 636.9,317.5 637.3,319.3 637.6,320.7 637.9,322.5 638.2,324.6 638.5,325.5 638.8,327.5 639.1,328.9 639.5,331.1 639.8,332.3 640.1,334.0 640.4,335.7 640.7,337.4 641.0,339.3 641.3,340.7 641.7,342.2 642.1,344.2 642.5,345.2 642.9,346.9 643.3,348.3 643.7,350.0 644.1,352.2 644.5,353.7 644.9,354.8 645.3,356.7 645.7,358.0 646.1,359.8 646.5,361.7 646.9,363.4 647.3,364.9 647.7,366.4 648.1,367.6 648.5,369.4 648.9,370.8 649.3,372.7 649.6,374.4 649.9,376.0 650.2,377.3 650.5,379.0 650.8,381.1 651.1,382.1 651.5,384.4 651.8,386.2 652.1,387.9 652.4,389.0 652.7,390.8 653.0,392.4 653.3,394.0 653.7,395.7 654.1,397.6 654.5,399.0 654.9,400.2 655.3,402.3 655.7,403.6 656.1,405.3 656.5,407.0 656.9,408.0 657.3,410.0 658.3,411.8 659.2,413.2 660.2,414.6 661.1,416.1 662.1,417.6 663.0,418.9 664.0,420.7 664.8,422.2 665.5,423.3 666.3,425.2 667.0,426.9 667.8,428.2 668.5,429.8 669.3,431.3 669.7,433.3 670.1,434.9 670.5,435.8 670.9,438.0 671.3,439.4 671.7,440.5 672.1,442.4 672.5,443.9 672.9,445.3 673.3,447.3 673.7,449.0 674.1,451.0 674.5,452.1 675.0,454.2 675.4,455.7 675.8,456.8 676.2,459.1 676.6,460.6 677.0,462.5 677.5,464.0 677.9,465.6 678.3,466.9 678.7,468.7 679.3,470.6 679.8,472.3 680.4,473.9 681.0,475.1 681.6,477.0 682.1,478.4 682.7,480.0 683.2,481.4 683.6,483.0 684.1,484.8 684.6,486.6 685.1,488.3 685.5,490.3 686.0,492.0 686.5,493.9 686.9,495.5 687.4,497.1 687.9,499.0 688.4,500.4 688.8,502.3 689.3,504.0 690.0,505.8 690.6,507.0 691.3,508.4 692.0,510.6 692.6,511.9 693.3,513.3 693.9,514.9 694.4,516.6 695.0,518.5 695.6,520.2 696.2,521.6 696.7,523.1 697.3,525.3 697.9,526.8 698.4,529.0 699.0,530.1 699.6,532.1 700.2,533.6 700.7,535.3 701.3,537.3 702.1,538.7 703.0,540.6 703.9,542.0 704.7,544.0 705.8,544.9 706.8,546.3 707.9,547.7 708.9,549.4 710.0,550.7 710.7,551.9 711.3,553.4 712.0,555.3 712.7,556.8 713.3,558.6 714.0,560.0 714.6,561.2 715.1,563.1 715.7,564.7 716.3,566.0 716.9,568.5 717.4,569.4 718.0,571.3 718.9,569.4 719.8,568.2 720.6,566.3 721.5,565.2 722.4,563.4 723.3,562.0 724.3,563.1 725.3,564.5 726.3,566.6 727.3,567.6 728.3,569.5 729.3,570.7 729.9,572.4 730.4,574.5 731.0,575.7 731.6,577.3 732.2,579.1 732.7,581.3 733.3,582.7 733.7,584.4 734.1,585.7 734.4,587.1 734.8,589.2 735.2,591.1 735.6,592.3 735.9,593.4 736.3,595.0 736.7,597.0 738.0,597.7 739.3,598.8 740.7,599.8 742.0,600.8 743.3,602.3 744.2,603.9 745.1,605.6 746.0,606.4 746.9,608.5 747.8,609.5 748.7,611.0 750.0,610.3 751.4,609.4 752.7,608.4 754.0,607.0 754.8,608.0 755.6,609.7 756.4,611.4 757.1,613.2 757.9,613.9 758.7,615.7 759.6,616.8 760.5,618.7 761.5,619.3 762.4,620.9 763.3,622.3 764.2,623.8 765.2,625.7 766.1,627.5 767.1,628.4 768.0,630.3 769.2,631.7 770.4,632.9 771.5,634.1 772.7,635.0 773.5,633.6 774.2,632.5 775.0,630.6 775.7,629.2 776.5,627.6 777.2,626.7 778.0,625.0 779.6,624.3 781.1,623.5 782.7,623.0 783.6,624.2 784.5,626.1 785.5,627.5 786.4,629.0 787.3,630.3 787.9,631.7 788.4,633.3 789.0,634.6 789.6,636.6 790.2,637.5 790.7,639.4 791.3,641.0 792.0,642.8 792.6,644.3 793.3,645.3 794.0,647.0 794.6,649.1 795.3,650.3 796.2,651.9 797.1,653.5 798.0,655.0 798.9,656.1 799.8,657.9 800.7,659.0 802.5,659.6 804.2,659.7 806.0,660.3 807.1,661.5 808.2,662.6 809.4,664.2 810.5,666.0 811.6,666.6 812.7,668.3 814.2,669.3 815.8,669.7 817.4,670.6 818.9,672.0 820.5,672.6 822.0,673.7 823.0,674.6 823.9,676.0 824.9,677.8 825.8,679.1 826.8,679.9 827.7,681.4 828.7,683.0 829.6,684.9 830.5,685.6 831.4,687.4 832.2,688.7 833.1,690.5 834.0,691.7 835.5,692.8 837.0,694.0 838.5,694.7 840.0,695.7 840.9,697.0 841.8,698.6 842.6,700.0 843.5,702.0 845.1,703.0 846.6,703.0 848.2,703.6 849.7,705.1 851.3,705.1 852.8,706.4 854.4,706.7 856.0,707.4 857.5,708.8 859.1,709.7 860.6,711.3 862.2,712.1 863.4,713.4 864.7,714.7 865.9,716.1 867.2,717.4 868.4,718.3 870.0,718.8 871.5,719.7 873.1,720.3 874.6,720.6 876.2,722.0 877.7,722.4 879.3,723.0 880.4,724.5 881.5,725.2 882.6,726.7 883.8,727.8 884.9,729.3 886.0,729.9 887.1,731.5 888.6,732.1 890.2,733.1 891.8,733.5 893.3,734.7 894.9,735.6 896.4,736.2 897.8,737.0 899.2,738.1 900.6,738.9 902.0,739.4 903.3,740.4 904.7,741.8 906.1,742.1 907.5,743.1 908.9,744.0 910.3,744.5 911.7,745.4 913.1,746.2 914.5,747.8 915.9,748.5 917.3,749.4 918.7,750.4 920.1,750.9 921.5,752.0 922.9,752.5 924.4,753.2 926.0,753.8 927.5,754.9 929.1,755.5 930.6,756.3 932.2,756.5 933.7,757.2 935.1,758.3 936.6,758.9 938.0,760.3 939.4,761.2 940.9,761.5 942.3,762.6" fill="none" stroke="#eef8f8" stroke-opacity="0.6" stroke-width="4.2" stroke-linejoin="round"/><polyline points="151.7,780.1 153.2,778.9 154.7,778.1 156.3,777.0 157.8,776.2 159.3,775.1 160.9,774.3 162.6,772.8 164.2,771.8 165.9,771.6 167.5,770.4 168.9,769.0 170.4,767.8 171.9,767.3 173.3,765.7 174.7,764.7 176.0,764.1 177.4,762.8 178.8,762.0 180.1,760.6 181.5,759.9 182.9,758.8 184.4,757.9 185.9,756.4 187.3,755.2 188.8,754.1 190.2,752.8 191.7,750.9 193.2,750.0 194.6,749.5 196.1,748.6 197.6,747.6 199.0,747.1 200.4,745.7 201.9,745.4 203.4,744.0 204.8,743.0 205.8,741.7 206.9,740.4 207.9,738.8 208.9,737.2 210.5,736.7 212.1,735.4 213.7,734.8 215.3,733.7 216.8,732.6 218.2,732.0 219.7,731.0 221.2,729.6 222.3,727.8 223.5,726.3 224.7,724.9 225.8,723.7 227.4,723.6 228.9,722.5 230.5,722.0 231.9,720.8 233.2,719.3 234.6,718.2 236.0,716.8 237.3,715.5 238.7,714.4 240.2,713.5 241.8,712.5 243.3,711.5 245.2,711.1 247.2,710.1 249.1,709.2 250.3,708.0 251.4,706.4 252.6,704.5 253.8,703.7 254.9,702.1 256.1,700.4 257.3,699.8 258.4,698.6 259.6,696.9 260.8,695.8 261.9,694.0 263.1,692.4 264.3,691.3 265.5,689.5 266.7,688.7 267.9,687.1 269.1,685.5 270.3,684.4 272.2,684.0 274.0,684.7 275.9,684.4 276.8,683.5 277.8,681.3 278.7,680.5 279.6,678.8 280.5,677.2 281.5,675.9 282.4,674.7 284.0,673.9 285.6,672.9 287.2,671.5 288.8,670.6 290.4,670.5 292.0,669.9 292.7,667.9 293.4,666.9 294.1,664.9 294.8,663.8 295.5,662.3 296.2,660.2 296.9,658.6 297.6,657.6 298.3,655.6 299.0,653.9 299.7,653.0 300.5,651.0 301.2,649.7 301.9,648.5 302.6,647.2 303.3,645.7 304.0,643.9 304.7,642.3 305.4,641.5 306.1,639.5 306.8,638.6 307.5,637.1 308.2,635.2 309.6,636.1 311.0,637.2 312.4,638.3 313.8,639.3 314.6,640.9 315.4,642.4 316.2,643.8 317.0,645.4 317.8,647.1 318.6,648.2 319.4,649.7 321.0,648.3 322.7,647.2 324.3,645.7 325.0,644.0 325.7,642.7 326.4,641.8 327.1,640.0 327.9,638.6 328.6,636.7 329.3,635.6 330.0,634.3 330.7,632.8 332.3,631.2 333.9,630.4 334.6,629.0 335.3,627.6 335.9,625.6 336.6,624.6 337.3,623.0 338.0,621.5 339.0,623.3 339.9,624.6 340.9,626.5 341.8,628.2 342.8,629.6 343.7,627.8 344.7,626.5 345.6,625.7 346.5,624.6 347.5,622.6 348.4,621.5 349.8,620.4 351.1,619.5 352.4,618.1 353.8,617.1 355.1,616.0 356.5,615.1 357.1,613.4 357.7,612.0 358.3,610.1 358.9,608.5 359.5,607.3 360.1,605.0 360.7,603.9 361.3,602.2 361.8,600.8 362.2,598.8 362.7,597.1 363.1,596.0 363.6,593.9 364.0,592.2 364.5,590.9 365.4,589.5 366.4,588.4 367.4,586.5 368.3,585.4 369.2,584.1 370.2,582.9 371.2,584.6 372.1,585.7 373.1,587.5 374.0,588.4 375.0,590.1 375.7,588.5 376.4,587.3 377.1,586.0 377.7,584.1 378.4,582.4 379.1,580.8 379.8,579.7 380.5,578.1 381.2,576.2 381.9,575.1 382.5,573.5 383.2,571.3 383.9,570.0 385.0,568.5 386.1,567.6 387.1,566.2 388.2,565.0 389.3,563.4 389.9,561.7 390.5,559.9 391.0,558.5 391.6,557.3 392.2,555.3 392.8,553.8 393.3,552.2 393.9,550.7 394.5,549.1 395.1,548.0 395.6,545.7 396.2,544.0 396.8,543.2 397.4,541.6 397.9,540.1 398.5,538.0 399.1,536.5 399.6,535.3 400.1,533.6 400.6,531.3 401.1,530.2 401.6,528.6 402.1,526.8 402.6,525.1 403.0,523.2 403.5,521.7 404.0,519.9 404.5,518.1 405.0,517.0 405.5,515.1 406.0,513.9 406.5,512.0 406.9,510.0 407.4,509.2 407.8,507.5 408.2,506.1 408.7,504.5 409.1,502.9 409.6,501.1 410.0,499.0 410.4,498.1 410.9,496.0 411.3,494.5 411.7,493.3 412.2,491.6 412.6,490.0 412.9,488.3 413.3,487.1 413.6,485.2 414.0,483.3 414.3,481.6 414.6,480.6 415.0,478.6 415.3,477.2 415.6,475.2 416.0,473.4 416.3,472.1 416.7,470.8 417.0,468.5 417.3,467.5 417.7,466.0 418.0,464.2 418.4,462.6 418.7,460.7 419.1,458.6 419.5,457.5 419.9,456.1 420.3,453.8 420.7,452.3 421.1,450.7 421.6,449.3 422.0,447.6 422.4,446.0 422.8,444.6 423.2,442.3 423.6,441.1 424.4,439.2 425.2,437.8 426.0,436.3 426.8,434.8 427.7,434.1 428.5,432.5 429.3,430.3 430.1,429.2 430.9,427.7 431.8,426.0 432.8,424.5 433.7,423.0 434.6,421.6 435.0,420.1 435.4,418.4 435.8,416.6 436.2,414.8 436.6,413.3 437.0,411.5 437.4,410.2 437.8,408.7 438.2,406.9 438.6,405.1 438.9,403.2 439.3,401.7 439.7,400.2 440.0,398.8 440.4,397.3 440.7,395.3 441.1,394.0 441.5,392.2 441.8,390.4 442.2,388.8 442.6,387.1 442.9,385.7 443.3,384.3 443.6,382.4 444.0,381.1 444.3,379.3 444.7,377.6 445.0,376.3 445.4,374.8 445.7,372.7 446.1,371.4 446.4,369.9 446.8,368.7 447.1,367.2 447.5,365.1 447.8,364.0 448.2,362.3 448.5,360.3 448.9,358.9 449.2,357.0 449.6,355.8 449.9,354.5 450.2,352.7 450.5,351.3 450.8,349.5 451.1,347.8 451.4,346.2 451.7,344.5 452.0,342.4 452.3,341.2 452.6,339.1 452.9,337.6 453.2,336.5 453.6,334.2 453.9,332.6 454.2,331.0 454.5,330.1 454.8,327.8 455.1,326.0 455.4,325.2 455.7,322.9 456.0,321.9 456.3,320.1 456.6,318.6 456.9,316.7 457.5,315.6 458.0,313.8 458.6,312.4 459.1,310.3 459.7,309.4 460.3,307.7 460.8,306.3 461.4,304.3 462.0,303.4 462.5,302.0 463.1,299.7 463.6,298.4 464.2,297.1 464.7,295.5 465.2,294.1 465.7,292.0 466.2,290.3 466.7,288.7 467.2,287.5 467.8,286.0 468.3,284.0 468.8,282.4 469.3,280.8 469.8,279.1 470.3,277.6 471.5,275.9 472.8,274.0 474.0,272.7 476.0,273.1 478.1,273.9 480.1,273.9 481.0,272.3 482.0,271.1 482.9,269.0 483.8,268.0 484.7,266.5 485.6,264.9 486.6,263.2 487.5,261.7 487.9,260.1 488.3,258.6 488.8,257.2 489.2,254.9 489.6,253.3 490.0,252.0 490.6,250.6 491.2,249.0 491.8,247.0 492.3,245.3 492.9,243.9 493.5,242.0 494.2,240.2 494.9,238.8 495.6,237.2 496.2,236.1 496.9,234.3 497.6,232.8 498.3,231.7 499.0,230.0 499.8,228.7 500.5,226.3 501.2,224.9 502.0,223.0 502.4,221.2 502.9,219.9 503.3,217.9 503.7,215.9 504.1,214.2 504.6,212.3 505.0,211.0 508.0,210.0 509.0,211.5 510.0,213.0 511.7,211.9 513.3,210.7 515.0,210.0 516.7,209.2 518.3,208.5 520.0,208.0 521.7,207.6 523.3,206.3 525.0,206.0 526.0,205.1 527.0,203.3 528.0,202.0 528.8,200.7 529.6,199.2 530.4,198.1 531.2,196.7 532.0,195.0 533.7,194.1 535.3,193.0 537.0,192.0 538.2,190.8 539.4,189.5 540.6,187.7 541.8,186.6 543.0,185.0 545.0,184.7 547.0,183.5 548.2,184.8 549.4,185.9 550.6,187.2 551.8,188.9 553.0,190.0 554.4,191.0 555.8,192.0 557.2,192.7 558.6,193.0 560.0,194.0 560.8,195.1 561.6,196.6 562.4,197.9 563.2,199.8 564.0,201.0 566.0,202.3 568.0,203.0 569.7,204.0 571.3,204.1 573.0,205.0 574.7,206.0 576.3,206.2 578.0,207.0 579.7,206.9 581.3,207.2 583.0,207.0 585.0,206.1 587.0,206.0 587.4,207.2 587.9,209.4 588.3,210.5 588.7,212.2 589.1,213.9 589.6,215.6 590.0,217.0 590.6,218.2 591.2,220.1 591.9,221.8 592.5,223.5 593.1,224.9 593.8,226.8 594.4,228.8 595.0,230.0 596.0,231.2 597.0,232.7 598.0,234.0 598.4,235.3 598.9,237.1 599.3,239.1 599.8,240.3 600.2,242.7 600.7,244.4 601.1,245.3 601.6,247.7 602.0,249.0 602.9,250.3 603.8,252.0 604.6,253.4 605.5,254.3 606.4,256.0 607.2,257.4 608.1,258.9 609.0,260.0 610.7,262.0 612.4,262.1 614.0,262.9 615.6,263.4 617.3,263.3 618.0,264.9 618.8,266.3 619.5,267.4 620.3,269.3 621.0,270.6 621.8,272.4 622.5,273.9 623.3,275.3 624.0,276.7 624.5,278.0 625.1,280.0 625.6,281.6 626.1,282.8 626.6,285.1 627.2,286.4 627.7,287.6 628.2,289.9 628.8,290.8 629.3,292.7 630.1,294.1 630.9,296.1 631.7,297.6 632.5,299.1 633.3,300.7 633.7,302.5 634.0,304.0 634.4,305.6 634.8,307.2 635.1,308.8 635.5,311.0 635.8,312.8 636.2,314.3 636.6,316.1 636.9,317.5 637.3,319.3 637.6,320.7 637.9,322.5 638.2,324.6 638.5,325.5 638.8,327.5 639.1,328.9 639.5,331.1 639.8,332.3 640.1,334.0 640.4,335.7 640.7,337.4 641.0,339.3 641.3,340.7 641.7,342.2 642.1,344.2 642.5,345.2 642.9,346.9 643.3,348.3 643.7,350.0 644.1,352.2 644.5,353.7 644.9,354.8 645.3,356.7 645.7,358.0 646.1,359.8 646.5,361.7 646.9,363.4 647.3,364.9 647.7,366.4 648.1,367.6 648.5,369.4 648.9,370.8 649.3,372.7 649.6,374.4 649.9,376.0 650.2,377.3 650.5,379.0 650.8,381.1 651.1,382.1 651.5,384.4 651.8,386.2 652.1,387.9 652.4,389.0 652.7,390.8 653.0,392.4 653.3,394.0 653.7,395.7 654.1,397.6 654.5,399.0 654.9,400.2 655.3,402.3 655.7,403.6 656.1,405.3 656.5,407.0 656.9,408.0 657.3,410.0 658.3,411.8 659.2,413.2 660.2,414.6 661.1,416.1 662.1,417.6 663.0,418.9 664.0,420.7 664.8,422.2 665.5,423.3 666.3,425.2 667.0,426.9 667.8,428.2 668.5,429.8 669.3,431.3 669.7,433.3 670.1,434.9 670.5,435.8 670.9,438.0 671.3,439.4 671.7,440.5 672.1,442.4 672.5,443.9 672.9,445.3 673.3,447.3 673.7,449.0 674.1,451.0 674.5,452.1 675.0,454.2 675.4,455.7 675.8,456.8 676.2,459.1 676.6,460.6 677.0,462.5 677.5,464.0 677.9,465.6 678.3,466.9 678.7,468.7 679.3,470.6 679.8,472.3 680.4,473.9 681.0,475.1 681.6,477.0 682.1,478.4 682.7,480.0 683.2,481.4 683.6,483.0 684.1,484.8 684.6,486.6 685.1,488.3 685.5,490.3 686.0,492.0 686.5,493.9 686.9,495.5 687.4,497.1 687.9,499.0 688.4,500.4 688.8,502.3 689.3,504.0 690.0,505.8 690.6,507.0 691.3,508.4 692.0,510.6 692.6,511.9 693.3,513.3 693.9,514.9 694.4,516.6 695.0,518.5 695.6,520.2 696.2,521.6 696.7,523.1 697.3,525.3 697.9,526.8 698.4,529.0 699.0,530.1 699.6,532.1 700.2,533.6 700.7,535.3 701.3,537.3 702.1,538.7 703.0,540.6 703.9,542.0 704.7,544.0 705.8,544.9 706.8,546.3 707.9,547.7 708.9,549.4 710.0,550.7 710.7,551.9 711.3,553.4 712.0,555.3 712.7,556.8 713.3,558.6 714.0,560.0 714.6,561.2 715.1,563.1 715.7,564.7 716.3,566.0 716.9,568.5 717.4,569.4 718.0,571.3 718.9,569.4 719.8,568.2 720.6,566.3 721.5,565.2 722.4,563.4 723.3,562.0 724.3,563.1 725.3,564.5 726.3,566.6 727.3,567.6 728.3,569.5 729.3,570.7 729.9,572.4 730.4,574.5 731.0,575.7 731.6,577.3 732.2,579.1 732.7,581.3 733.3,582.7 733.7,584.4 734.1,585.7 734.4,587.1 734.8,589.2 735.2,591.1 735.6,592.3 735.9,593.4 736.3,595.0 736.7,597.0 738.0,597.7 739.3,598.8 740.7,599.8 742.0,600.8 743.3,602.3 744.2,603.9 745.1,605.6 746.0,606.4 746.9,608.5 747.8,609.5 748.7,611.0 750.0,610.3 751.4,609.4 752.7,608.4 754.0,607.0 754.8,608.0 755.6,609.7 756.4,611.4 757.1,613.2 757.9,613.9 758.7,615.7 759.6,616.8 760.5,618.7 761.5,619.3 762.4,620.9 763.3,622.3 764.2,623.8 765.2,625.7 766.1,627.5 767.1,628.4 768.0,630.3 769.2,631.7 770.4,632.9 771.5,634.1 772.7,635.0 773.5,633.6 774.2,632.5 775.0,630.6 775.7,629.2 776.5,627.6 777.2,626.7 778.0,625.0 779.6,624.3 781.1,623.5 782.7,623.0 783.6,624.2 784.5,626.1 785.5,627.5 786.4,629.0 787.3,630.3 787.9,631.7 788.4,633.3 789.0,634.6 789.6,636.6 790.2,637.5 790.7,639.4 791.3,641.0 792.0,642.8 792.6,644.3 793.3,645.3 794.0,647.0 794.6,649.1 795.3,650.3 796.2,651.9 797.1,653.5 798.0,655.0 798.9,656.1 799.8,657.9 800.7,659.0 802.5,659.6 804.2,659.7 806.0,660.3 807.1,661.5 808.2,662.6 809.4,664.2 810.5,666.0 811.6,666.6 812.7,668.3 814.2,669.3 815.8,669.7 817.4,670.6 818.9,672.0 820.5,672.6 822.0,673.7 823.0,674.6 823.9,676.0 824.9,677.8 825.8,679.1 826.8,679.9 827.7,681.4 828.7,683.0 829.6,684.9 830.5,685.6 831.4,687.4 832.2,688.7 833.1,690.5 834.0,691.7 835.5,692.8 837.0,694.0 838.5,694.7 840.0,695.7 840.9,697.0 841.8,698.6 842.6,700.0 843.5,702.0 845.1,703.0 846.6,703.0 848.2,703.6 849.7,705.1 851.3,705.1 852.8,706.4 854.4,706.7 856.0,707.4 857.5,708.8 859.1,709.7 860.6,711.3 862.2,712.1 863.4,713.4 864.7,714.7 865.9,716.1 867.2,717.4 868.4,718.3 870.0,718.8 871.5,719.7 873.1,720.3 874.6,720.6 876.2,722.0 877.7,722.4 879.3,723.0 880.4,724.5 881.5,725.2 882.6,726.7 883.8,727.8 884.9,729.3 886.0,729.9 887.1,731.5 888.6,732.1 890.2,733.1 891.8,733.5 893.3,734.7 894.9,735.6 896.4,736.2 897.8,737.0 899.2,738.1 900.6,738.9 902.0,739.4 903.3,740.4 904.7,741.8 906.1,742.1 907.5,743.1 908.9,744.0 910.3,744.5 911.7,745.4 913.1,746.2 914.5,747.8 915.9,748.5 917.3,749.4 918.7,750.4 920.1,750.9 921.5,752.0 922.9,752.5 924.4,753.2 926.0,753.8 927.5,754.9 929.1,755.5 930.6,756.3 932.2,756.5 933.7,757.2 935.1,758.3 936.6,758.9 938.0,760.3 939.4,761.2 940.9,761.5 942.3,762.6" fill="none" stroke="#ff0000" stroke-width="2.0" stroke-linejoin="round"/>
<rect x="151" y="124" width="792" height="2" fill="#3a50e8"/><rect x="151" y="126" width="792" height="1" fill="#8090e0"/><rect x="151" y="124" width="1.5" height="658" fill="#3040f0"/><rect x="942" y="124" width="2" height="658" fill="#3a50e8"/><rect x="151" y="781" width="793" height="2" fill="#3a48e0"/>
</svg>
<svg class="a" style="left:538px;top:130px" width="18" height="46">
<path d="M4 5.5q5-4 10 0" stroke="#fff" stroke-width="3" fill="none"/><path d="M4 5.5q5-4 10 0" stroke="#111" stroke-width="1.1" fill="none"/>
<path d="M4 41q5 4 10 0" stroke="#fff" stroke-width="3" fill="none"/><path d="M4 41q5 4 10 0" stroke="#111" stroke-width="1.1" fill="none"/>
</svg>
<div class="a" style="left:539px;top:136px;width:16px;font-size:11px;line-height:11.5px;text-align:center;color:#111;text-shadow:0 0 1px #fff,0 0 1px #fff">手<br>稲<br>山</div>

<div class="hdr" style="top:96px;height:18px;border-top-color:#6e6e6e;line-height:17px">全区間 (トラック)</div>
<div class="a st" style="top:116px;height:144px"><div class="r" style="top:0px"><span class="k">距離</span><span class="v" style="right:1px">11.119km</span></div><div class="r" style="top:13px"><span class="k">沿面距離</span><span class="v" style="right:1px">11.392km</span></div><div class="r" style="top:26px"><span class="k">標高差</span><span class="v" style="right:1px">23.072m</span></div><div class="r" style="top:39px"><span class="k">方位</span><span class="v" style="right:6px">283.34°</span></div><div class="r" style="top:52px"><span class="k">俯角→</span><span class="v" style="right:6px">-85.23°</span></div><div class="r" style="top:65px"><span class="k">俯角←</span><span class="v" style="right:6px">85.23°</span></div><div class="r" style="top:78px"><span class="k">沈み量</span><span class="v" style="right:1px">-0m</span></div><div class="r" style="top:91px"><span class="k">所要時間</span><span class="v" style="right:1px">06:23:17</span></div><div class="r" style="top:104px"><span class="k">累積標高(+)</span><span class="v" style="right:1px">896.910m</span></div><div class="r" style="top:117px"><span class="k">累積標高(-)</span><span class="v" style="right:1px">-873.838m</span></div><div class="r" style="top:130px"><span class="k">平均速度</span><span class="v" style="right:1px">1.7km/h</span></div></div>
<div class="hdr" style="top:263px">全区間 (地形)</div>
<div class="a st" style="top:282px;height:144px"><div class="r" style="top:0px"><span class="k">距離</span><span class="v" style="right:1px">11.119km</span></div><div class="r" style="top:13px"><span class="k">沿面距離</span><span class="v" style="right:1px">11.391km</span></div><div class="r" style="top:26px"><span class="k">標高差</span><span class="v" style="right:1px">23.072m</span></div><div class="r" style="top:39px"><span class="k">方位</span><span class="v" style="right:6px">283.34°</span></div><div class="r" style="top:52px"><span class="k">俯角→</span><span class="v" style="right:6px">-85.23°</span></div><div class="r" style="top:65px"><span class="k">俯角←</span><span class="v" style="right:6px">85.23°</span></div><div class="r" style="top:78px"><span class="k">沈み量</span><span class="v" style="right:1px">-0m</span></div><div class="r" style="top:91px"><span class="k">推定時間</span><span class="v" style="right:1px">04:10:47</span></div><div class="r" style="top:104px"><span class="k">累積標高(+)</span><span class="v" style="right:1px">927.688m</span></div><div class="r" style="top:117px"><span class="k">累積標高(-)</span><span class="v" style="right:1px">-927.652m</span></div><div class="r" style="top:130px"><span class="k">見通し</span><span class="v" style="right:1px;font-family:'Liberation Sans',sans-serif;font-size:12px">見えます</span></div></div>

<div class="a" id="sec"><span style="font-family:'Liberation Sans',sans-serif">区間</span> 1</div>
<div class="a" id="blue"><div>11.119km</div><div>11.392km</div><div>06:23:17</div><div>23.072m</div></div>
<div class="bl" style="top:804px">直線距離</div>
<div class="bl" style="top:820px">沿面距離</div>
<div class="bl" style="top:836px">所要時間</div>
<div class="bl" style="top:851px">標高差</div>
</body></html>
